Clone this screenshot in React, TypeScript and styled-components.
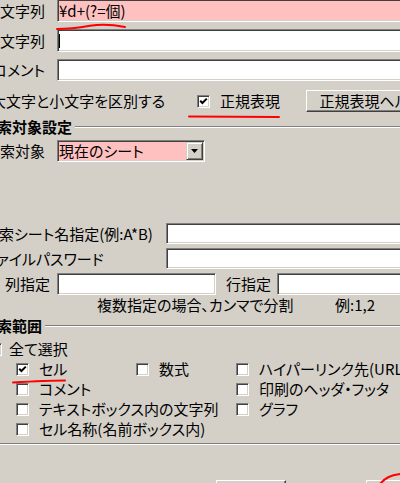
import React from "react";
import styled, { createGlobalStyle } from "styled-components";

const Global = createGlobalStyle`
  html, body { margin: 0; padding: 0; background: #d4d0c8; }
  body {
    font-family: "Noto Sans CJK JP", "Noto Sans", sans-serif;
    font-size: 15px;
    line-height: 16px;
    font-feature-settings: "palt";
    color: #000;
  }
`;

const Viewport = styled.div`
  position: relative;
  width: 400px;
  height: 483px;
  overflow: hidden;
  background: #d4d0c8;
`;

const Dialog = styled.div`
  width: 480px;
  margin-left: -40px;
  display: flex;
  flex-direction: column;
`;

const FieldRow = styled.div<{ $mt?: number; $h?: number }>`
  display: grid;
  grid-template-columns: 85px 1fr;
  column-gap: 12px;
  align-items: stretch;
  height: ${(p) => p.$h ?? 23}px;
  margin-top: ${(p) => p.$mt ?? 0}px;
`;

const RightLabel = styled.div<{ $w?: number }>`
  display: flex;
  align-items: center;
  justify-content: flex-end;
  white-space: nowrap;
  min-width: 0;
  ${(p) => (p.$w ? `width: ${p.$w}px; flex: none;` : "")}
`;

const Label = styled.div`
  display: flex;
  align-items: center;
  white-space: nowrap;
`;

const Field = styled.div<{ $bg?: string; $w?: number }>`
  box-sizing: border-box;
  height: 100%;
  ${(p) => (p.$w ? `width: ${p.$w}px; flex: none;` : "flex: 1;")}
  min-width: 0;
  background: ${(p) => p.$bg ?? "#fff"};
  border: 1px solid;
  border-color: #808080 #fff #fff #808080;
  box-shadow: inset 1px 1px 0 #404040, inset -1px -1px 0 #d4d0c8;
  padding: 1px;
  display: flex;
  align-items: center;
  white-space: nowrap;
  overflow: hidden;
`;

const FieldText = styled.span`
  flex: 1;
`;

const Caret = styled.span`
  display: block;
  width: 1px;
  height: 14px;
  background: #000;
`;

const DropButton = styled.div`
  box-sizing: border-box;
  width: 17px;
  height: 100%;
  flex: none;
  background: #d4d0c8;
  border: 1px solid;
  border-color: #d4d0c8 #404040 #404040 #d4d0c8;
  box-shadow: inset 1px 1px 0 #fff, inset -1px -1px 0 #808080;
  display: flex;
  align-items: center;
  justify-content: center;
`;

const Box = styled.span`
  box-sizing: border-box;
  width: 13px;
  height: 13px;
  flex: none;
  background: #fff;
  border: 1px solid;
  border-color: #808080 #fff #fff #808080;
  box-shadow: inset 1px 1px 0 #404040, inset -1px -1px 0 #d4d0c8;
  display: flex;
  align-items: center;
  justify-content: center;
`;

const CheckItem = styled.div<{ $w?: number; $gap?: number }>`
  display: flex;
  align-items: center;
  gap: ${(p) => p.$gap ?? 10}px;
  white-space: nowrap;
  ${(p) => (p.$w ? `width: ${p.$w}px; flex: none;` : "")}
`;

const OptionRow = styled.div`
  display: flex;
  align-items: center;
  height: 22px;
  margin-top: 9px;
  padding-left: 8px;
`;

const Button = styled.div<{ $w: number; $h?: number }>`
  box-sizing: border-box;
  height: ${(p) => p.$h ?? 22}px;
  width: ${(p) => p.$w}px;
  flex: none;
  border: 1px solid;
  border-color: #fff #404040 #404040 #fff;
  box-shadow: inset -1px -1px 0 #808080, inset 1px 1px 0 #d4d0c8;
  display: flex;
  align-items: center;
  justify-content: center;
  white-space: nowrap;
`;

const GroupTitle = styled.div<{ $mt: number }>`
  display: flex;
  align-items: center;
  gap: 3px;
  height: 14px;
  line-height: 14px;
  margin-top: ${(p) => p.$mt}px;
  padding-left: 22px;
  font-weight: bold;
  font-feature-settings: normal;
  white-space: nowrap;
  &::after {
    content: "";
    flex: 1;
    height: 0;
    border-top: 1px solid #808080;
    border-bottom: 1px solid #fff;
  }
`;

const ComboRow = styled(FieldRow)`
  grid-template-columns: 85px 148px;
`;

const WideRow = styled.div<{ $mt: number }>`
  display: grid;
  grid-template-columns: 182px 1fr;
  height: 21px;
  margin-top: ${(p) => p.$mt}px;
  padding-left: 24px;
`;

const RangeRow = styled.div`
  display: flex;
  align-items: stretch;
  height: 22px;
  margin-top: 4px;
`;

const NoteRow = styled.div`
  display: grid;
  grid-template-columns: 238px auto;
  height: 16px;
  margin-top: 2px;
  padding-left: 137px;
  align-items: center;
  white-space: nowrap;
`;

const SelectAllRow = styled.div`
  display: flex;
  align-items: center;
  height: 16px;
  margin-top: 8px;
  padding-left: 29px;
`;

const CheckGrid = styled.div`
  display: grid;
  grid-template-columns: 120px 100px auto;
  grid-auto-rows: 20px;
  align-items: center;
  margin-top: 2px;
  padding-left: 56px;
`;

const Etched = styled.div<{ $mt: number }>`
  height: 0;
  margin-top: ${(p) => p.$mt}px;
  border-top: 1px solid #808080;
  border-bottom: 1px solid #fff;
`;

const ButtonRow = styled.div`
  display: flex;
  gap: 80px;
  margin-top: 35px;
  padding-left: 256px;
`;

const Marks = styled.svg`
  position: absolute;
  left: 0;
  top: 0;
  pointer-events: none;
`;

const Check = () => (
  <svg width="9" height="9" viewBox="0 0 9 9">
    <polyline points="1.2,3.8 3.4,6 7.8,1.6" fill="none" stroke="#000" strokeWidth="2" />
  </svg>
);

const CheckBox = ({ checked }: { checked?: boolean }) => <Box>{checked ? <Check /> : null}</Box>;

const Opt = ({ label, checked, w, gap }: { label: string; checked?: boolean; w?: number; gap?: number }) => (
  <CheckItem $w={w} $gap={gap}>
    <CheckBox checked={checked} />
    <span>{label}</span>
  </CheckItem>
);

export default function App() {
  return (
    <Viewport>
      <Global />
      <Dialog>
        <FieldRow $mt={-1}>
          <RightLabel>検索文字列</RightLabel>
          <Field $bg="#ffc0c0">
            <FieldText>¥d+(?=個)</FieldText>
          </Field>
        </FieldRow>
        <FieldRow $mt={7}>
          <RightLabel>置換文字列</RightLabel>
          <Field>
            <Caret />
          </Field>
        </FieldRow>
        <FieldRow $mt={7} $h={22}>
          <RightLabel>コメント</RightLabel>
          <Field />
        </FieldRow>

        <OptionRow>
          <Opt label="大文字と小文字を区別する" w={229} />
          <Opt label="正規表現" checked w={109} />
          <Button $w={130}>正規表現ヘルプ</Button>
        </OptionRow>

        <GroupTitle $mt={8}>検索対象設定</GroupTitle>
        <ComboRow $mt={6} $h={22}>
          <RightLabel>検索対象</RightLabel>
          <Field $bg="#ffc0c0">
            <FieldText>現在のシート</FieldText>
            <DropButton>
              <svg width="7" height="4" viewBox="0 0 7 4">
                <polygon points="0,0 7,0 3.5,4" fill="#000" />
              </svg>
            </DropButton>
          </Field>
        </ComboRow>

        <WideRow $mt={61}>
          <Label>検索シート名指定(例:A*B)</Label>
          <Field />
        </WideRow>
        <WideRow $mt={4}>
          <Label>ファイルパスワード</Label>
          <Field />
        </WideRow>
        <RangeRow>
          <RightLabel $w={90}>列指定</RightLabel>
          <Field $w={159} style={{ marginLeft: 7 }} />
          <Label style={{ marginLeft: 10, marginRight: 6 }}>行指定</Label>
          <Field />
        </RangeRow>
        <NoteRow>
          <span>複数指定の場合、カンマで分割</span>
          <span>例:1,2</span>
        </NoteRow>

        <GroupTitle $mt={6}>検索範囲</GroupTitle>
        <SelectAllRow>
          <Opt label="全て選択" gap={7} />
        </SelectAllRow>
        <CheckGrid>
          <Opt label="セル" checked />
          <Opt label="数式" />
          <Opt label="ハイパーリンク先(URL)" />
          <Opt label="コメント" />
          <span />
          <Opt label="印刷のヘッダ・フッタ" />
          <Opt label="テキストボックス内の文字列" />
          <span />
          <Opt label="グラフ" />
          <Opt label="セル名称(名前ボックス内)" />
        </CheckGrid>
        <Etched $mt={4} />
        <ButtonRow>
          <Button $w={70} $h={23} />
          <Button $w={80} $h={23} />
        </ButtonRow>
      </Dialog>

      <Marks width="400" height="483" viewBox="0 0 400 483">
        <g fill="none" stroke="#ff0000" strokeWidth="2" strokeLinecap="round">
          <path d="M57 29 C 70 29, 80 27.5, 90 25.8 S 115 25, 125 27" />
          <path d="M189 116.5 L279 117" />
          <path d="M13 382.5 C 30 381.5, 50 380.5, 65 380.5" />
          <path d="M379 485 C 385 478, 390 475, 401 474" />
        </g>
      </Marks>
    </Viewport>
  );
}
